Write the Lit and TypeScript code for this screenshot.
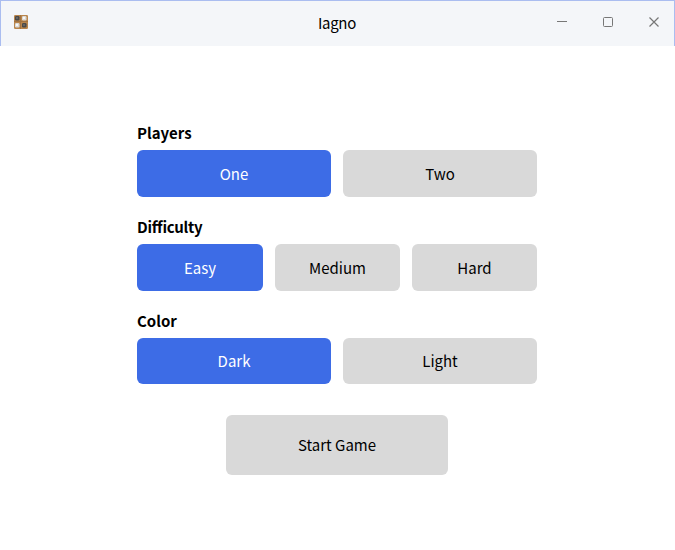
import { LitElement, html, css, svg } from "lit";
import { customElement } from "lit/decorators.js";

const groups = [
  { title: "Players", kind: "pair", options: ["One", "Two"] },
  { title: "Difficulty", kind: "triple", options: ["Easy", "Medium", "Hard"] },
  { title: "Color", kind: "pair short", options: ["Dark", "Light"] },
];

const discs = [
  { x: 1, y: 1, fill: "#4b4a49", shine: "#656463" },
  { x: 8, y: 1, fill: "#dcdad6", shine: "#f8f7f5" },
  { x: 1, y: 8, fill: "#dcdad6", shine: "#f8f7f5" },
  { x: 8, y: 8, fill: "#4b4a49", shine: "#656463" },
];

@customElement("app-root")
class AppRoot extends LitElement {
  static styles = css`
    :host { display: flex; flex-direction: column; height: 550px; background: #fff; color: #000;
      font-family: "Noto Sans CJK SC", "Noto Sans", sans-serif; font-size: 15px; line-height: 24px; }
    * { box-sizing: border-box; }
    .bar { height: 46px; background: #f4f6f9; border: 1px solid #aabdf0; border-bottom: 0;
      display: grid; grid-template-columns: 1fr auto 1fr; align-items: center; padding: 0 12px 0 13px; }
    .name { padding: 0 2px 1px 0; letter-spacing: -0.3px; }
    .icon { display: block; margin-top: -3px; }
    .controls { display: flex; justify-content: flex-end; gap: 30px; }
    .controls svg { display: block; margin-top: -4px; }
    .main { width: 400px; margin: 75px 0 0 137px; display: flex; flex-direction: column; }
    .group { height: 94px; }
    .title { font-weight: 700; height: 29px; line-height: 24px; }
    .triple-title { letter-spacing: -0.3px; font-feature-settings: "liga" 1; }
    .row { display: grid; column-gap: 12px; }
    .pair { grid-template-columns: 1fr 1fr; }
    .triple { grid-template-columns: 126px 125px 125px; }
    .btn { height: 47px; border-radius: 6px; background: #d9d9d9; display: flex;
      align-items: center; justify-content: center; }
    .short .btn { height: 46px; }
    .on { background: #3d6ce6; color: #fff; }
    .start { width: 222px; height: 60px; margin: 12px 0 0 89px; }
  `;
  render() {
    return html`
      <div class="bar">
        <svg class="icon" width="14" height="14" viewBox="0 0 14 14">
          <rect width="14" height="14" rx="1.2" fill="#b9854c"/>
          <path d="M6.5 0V14M0 6.5H14" stroke="#a27240"/>
          ${discs.map((d) => svg`<rect x=${d.x} y=${d.y} width="4.5" height="4.5" rx="1.2" fill=${d.fill}/><rect x=${d.x + 1} y=${d.y + 1} width="2" height="2" fill=${d.shine}/>`)}
        </svg>
        <div class="name">Iagno</div>
        <div class="controls">
          <svg width="16" height="16" viewBox="0 0 16 16" fill="none" stroke="#777"><path d="M3 7.5H13"/></svg>
          <svg width="16" height="16" viewBox="0 0 16 16" fill="none" stroke="#777"><rect x="3.5" y="3.5" width="9" height="9" rx="1"/></svg>
          <svg width="16" height="16" viewBox="0 0 16 16" fill="none" stroke="#777" stroke-width="1.2"><path d="M3.5 3.5L12.5 12.5M12.5 3.5L3.5 12.5"/></svg>
        </div>
      </div>
      <div class="main">
        ${groups.map((g) => html`<div class="group"><div class="title ${g.kind === "triple" ? "triple-title" : ""}">${g.title}</div>
          <div class="row ${g.kind}">${g.options.map((o, i) => html`<div class="btn ${i === 0 ? "on" : ""}">${o}</div>`)}</div></div>`)}
        <div class="btn start">Start Game</div>
      </div>`;
  }
}
